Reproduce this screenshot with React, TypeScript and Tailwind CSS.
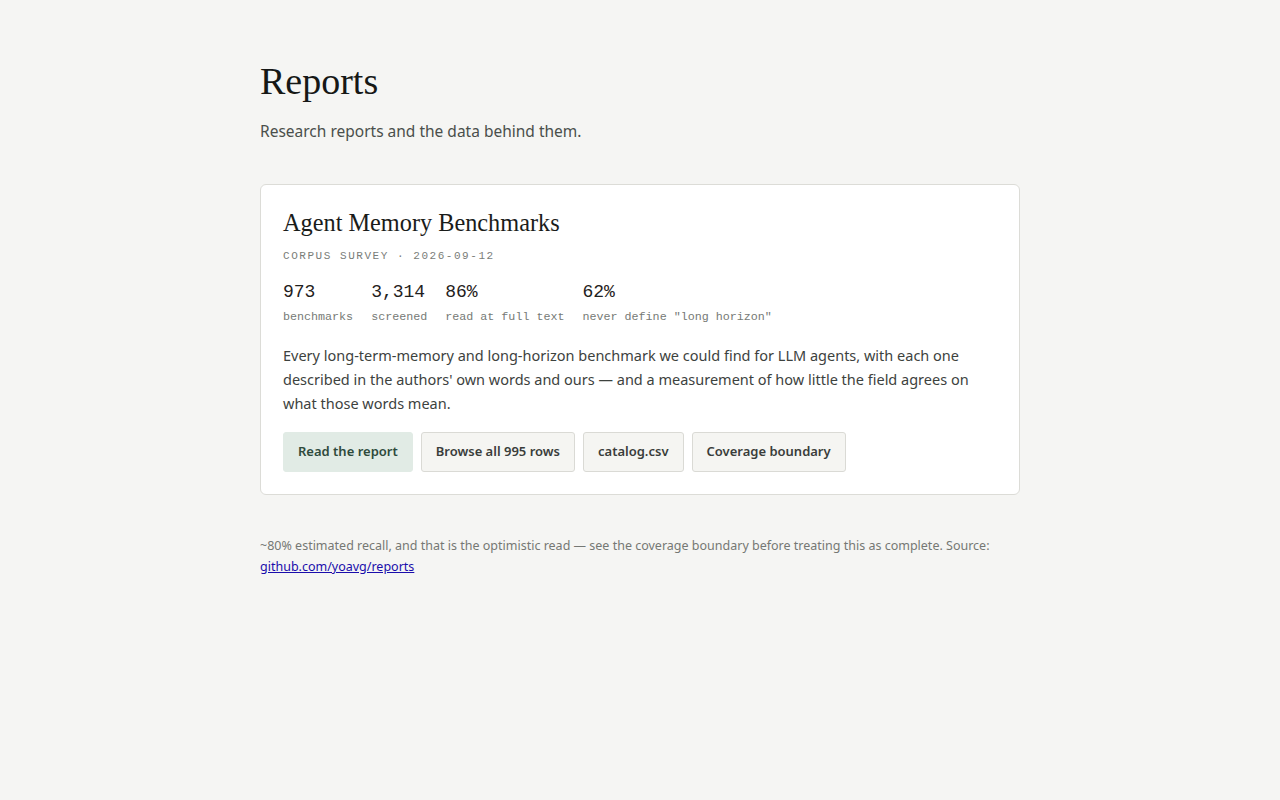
const sans = "font-['Noto_Sans',sans-serif]";
const serif = "font-['Liberation_Serif',serif]";
const mono = "font-['Liberation_Mono',monospace]";

type Stat = { value: string; label: string };

const stats: Stat[] = [
  { value: '973', label: 'benchmarks' },
  { value: '3,314', label: 'screened' },
  { value: '86%', label: 'read at full text' },
  { value: '62%', label: 'never define "long horizon"' },
];

const links = [
  { label: 'Read the report', primary: true },
  { label: 'Browse all 995 rows' },
  { label: 'catalog.csv' },
  { label: 'Coverage boundary' },
];

function ReportCard() {
  return (
    <div className="rounded-md border border-[#dcdcd7] bg-white px-[22px] pt-[22px] pb-[22px]">
      <h2 className={`${serif} text-[24.3px] leading-[32px] text-[#1a1c1a]`}>Agent Memory Benchmarks</h2>
      <div className={`${mono} mt-[9px] text-[11px] leading-[16px] tracking-[0.14em] text-[#7a7d79]`}>
        CORPUS SURVEY · 2026-09-12
      </div>

      <div className="mt-[15px] flex gap-[18px]">
        {stats.map((s) => (
          <div key={s.label} className="flex flex-col">
            <span className={`${mono} text-[18px] leading-[26px] text-[#1f2120]`}>{s.value}</span>
            <span className={`${mono} mt-[4px] text-[11.7px] leading-[16px] text-[#767a76]`}>{s.label}</span>
          </div>
        ))}
      </div>

      <p className={`${sans} mt-[18px] text-[14.5px] leading-[24px] text-[#3d423e]`}>
        Every long-term-memory and long-horizon benchmark we could find for LLM agents, with each one
        described in the authors' own words and ours — and a measurement of how little the field agrees on
        what those words mean.
      </p>

      <div className="mt-[17px] flex gap-2">
        {links.map((l) =>
          l.primary ? (
            <a
              key={l.label}
              className={`${sans} flex h-[40px] items-center rounded-[3px] border border-[#e1ebe5] bg-[#e1ebe5] px-[14px] text-[13px] font-semibold text-[#2e4a3c]`}
            >
              {l.label}
            </a>
          ) : (
            <a
              key={l.label}
              className={`${sans} flex h-[40px] items-center rounded-[3px] border border-[#dadad5] bg-[#f5f5f2] px-[14px] text-[13px] font-semibold text-[#3a3d3b]`}
            >
              {l.label}
            </a>
          )
        )}
      </div>
    </div>
  );
}

export default function App() {
  return (
    <div className="min-h-screen bg-[#f5f5f3]">
      <main className="mx-auto w-[760px] pt-[58px]">
        <h1 className={`${serif} text-[38px] leading-[46px] text-[#161816]`}>Reports</h1>
        <p className={`${sans} mt-[15px] text-[15.5px] leading-[24px] text-[#4a4f4b]`}>
          Research reports and the data behind them.
        </p>

        <div className="mt-[41px]">
          <ReportCard />
        </div>

        <p className={`${sans} mt-[40px] text-[12.5px] leading-[21px] text-[#757874]`}>
          ~80% estimated recall, and that is the optimistic read — see the coverage boundary before treating
          this as complete. Source:{' '}
          <a className="text-[#1a0dab] underline">github.com/yoavg/reports</a>
        </p>
      </main>
    </div>
  );
}
